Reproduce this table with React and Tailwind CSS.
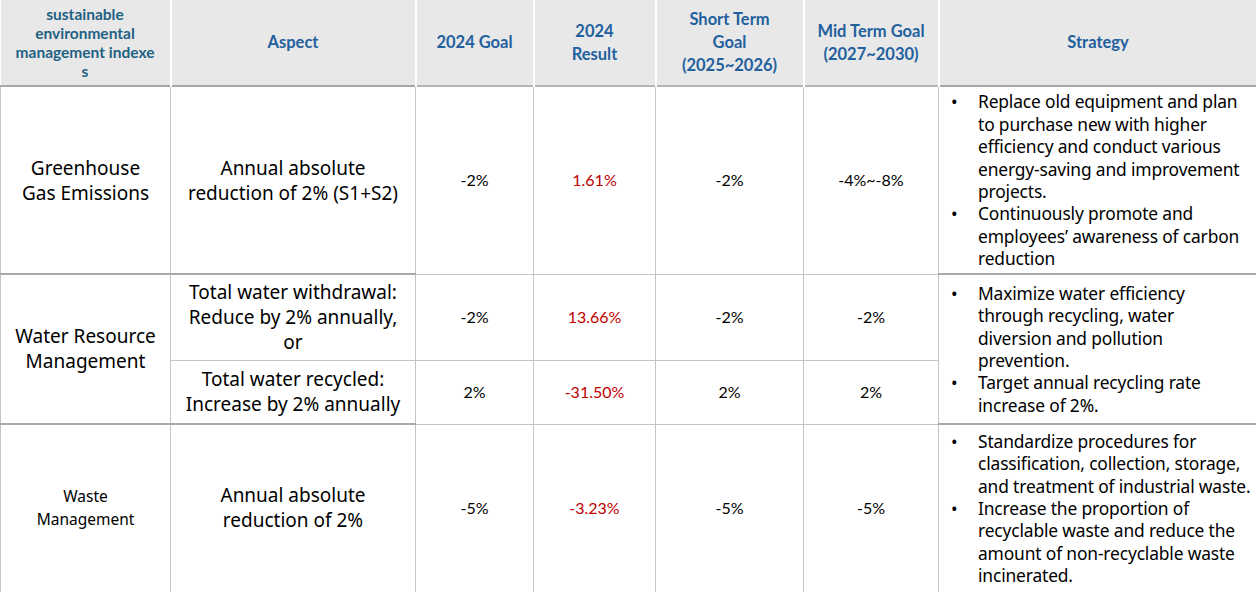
const body = { fontFamily: '"Noto Sans", "Open Sans", sans-serif' };
const calibri = { fontFamily: 'Lato, "Liberation Sans", sans-serif' };

const strategies = {
  ghg: [
    'Replace old equipment and plan to purchase new with  higher efficiency and conduct various energy-saving and improvement projects.',
    'Continuously promote and employees’ awareness of carbon reduction',
  ],
  water: [
    'Maximize water efficiency through recycling, water diversion and pollution prevention.',
    'Target annual recycling rate increase of 2%.',
  ],
  waste: [
    'Standardize procedures for classification, collection, storage, and treatment of industrial waste.',
    'Increase the proportion of recyclable waste and reduce the amount of non-recyclable waste incinerated.',
  ],
};

function Bullets({ items }) {
  return (
    <ul className="text-[17.4px] leading-[22.4px] text-black text-left tracking-[-0.15px]" style={body}>
      {items.map((t, i) => (
        <li key={i} className="flex">
          <span className="w-[39px] shrink-0 pl-[12px]">•</span>
          <span>{t}</span>
        </li>
      ))}
    </ul>
  );
}

function Num({ children, red }) {
  return (
    <td
      className={`border border-[#c4c4c4] text-center text-[16px] ${red ? 'text-[#c00000]' : 'text-black'}`}
      style={calibri}
    >
      {children}
    </td>
  );
}

export default function App() {
  const th = 'border-r-2 border-white text-center font-bold text-[16.5px] leading-[23px] text-[#23609e] px-1';
  const cell = 'border border-[#c4c4c4] text-center text-black';
  const rowTop = 'border-t-2 border-t-[#a8a8a8]';
  const big = 'text-[19px] leading-[25px]';

  return (
    <div className="w-[1256px] h-[592px] overflow-hidden bg-white">
      <table className="w-[1256px] table-fixed border-collapse">
        <colgroup>
          <col className="w-[170px]" />
          <col className="w-[245px]" />
          <col className="w-[118px]" />
          <col className="w-[122px]" />
          <col className="w-[148px]" />
          <col className="w-[135px]" />
          <col className="w-[318px]" />
        </colgroup>
        <thead>
          <tr className="h-[86px] bg-[#e8e8e8] border-b-2 border-[#b4b4b4]" style={calibri}>
            <th className="border-r-2 border-white text-center font-bold text-[15.5px] leading-[19px] text-[#1f6183] px-1">
              sustainable<br />environmental<br />management indexe<br />s
            </th>
            <th className={th}>Aspect</th>
            <th className={th}>2024 Goal</th>
            <th className={th}>2024<br />Result</th>
            <th className={th}>Short Term<br />Goal<br />(2025~2026)</th>
            <th className={th}>Mid Term Goal<br />(2027~2030)</th>
            <th className="text-center font-bold text-[16.5px] text-[#23609e]">Strategy</th>
          </tr>
        </thead>
        <tbody>
          <tr className="h-[188px]">
            <td className={`${cell} ${rowTop} ${big} pt-[2px]`} style={body}>
              Greenhouse<br />Gas Emissions
            </td>
            <td className={`${cell} ${rowTop} ${big} pt-[2px]`} style={body}>
              Annual absolute<br />reduction of 2% (S1+S2)
            </td>
            <Num>-2%</Num>
            <Num red>1.61%</Num>
            <Num>-2%</Num>
            <Num>-4%~-8%</Num>
            <td className={`${cell} ${rowTop} pr-0 align-middle`}>
              <Bullets items={strategies.ghg} />
            </td>
          </tr>
          <tr className="h-[86px]">
            <td rowSpan={2} className={`${cell} ${rowTop} ${big}`} style={body}>
              Water Resource<br />Management
            </td>
            <td className={`${cell} ${rowTop} ${big}`} style={body}>
              Total water withdrawal:<br />Reduce by 2% annually,<br />or
            </td>
            <Num>-2%</Num>
            <Num red>13.66%</Num>
            <Num>-2%</Num>
            <Num>-2%</Num>
            <td rowSpan={2} className={`${cell} ${rowTop} pr-[14px] align-middle`}>
              <Bullets items={strategies.water} />
            </td>
          </tr>
          <tr className="h-[64px]">
            <td className={`${cell} ${big}`} style={body}>
              Total water recycled:<br />Increase by 2% annually
            </td>
            <Num>2%</Num>
            <Num red>-31.50%</Num>
            <Num>2%</Num>
            <Num>2%</Num>
          </tr>
          <tr className="h-[168px]">
            <td className={`${cell} ${rowTop} text-[15.5px] leading-[23px]`} style={body}>
              Waste<br />Management
            </td>
            <td className={`${cell} ${rowTop} ${big}`} style={body}>
              Annual absolute<br />reduction of 2%
            </td>
            <Num>-5%</Num>
            <Num red>-3.23%</Num>
            <Num>-5%</Num>
            <Num>-5%</Num>
            <td className={`${cell} ${rowTop} pr-0 align-middle`}>
              <Bullets items={strategies.waste} />
            </td>
          </tr>
        </tbody>
      </table>
    </div>
  );
}
